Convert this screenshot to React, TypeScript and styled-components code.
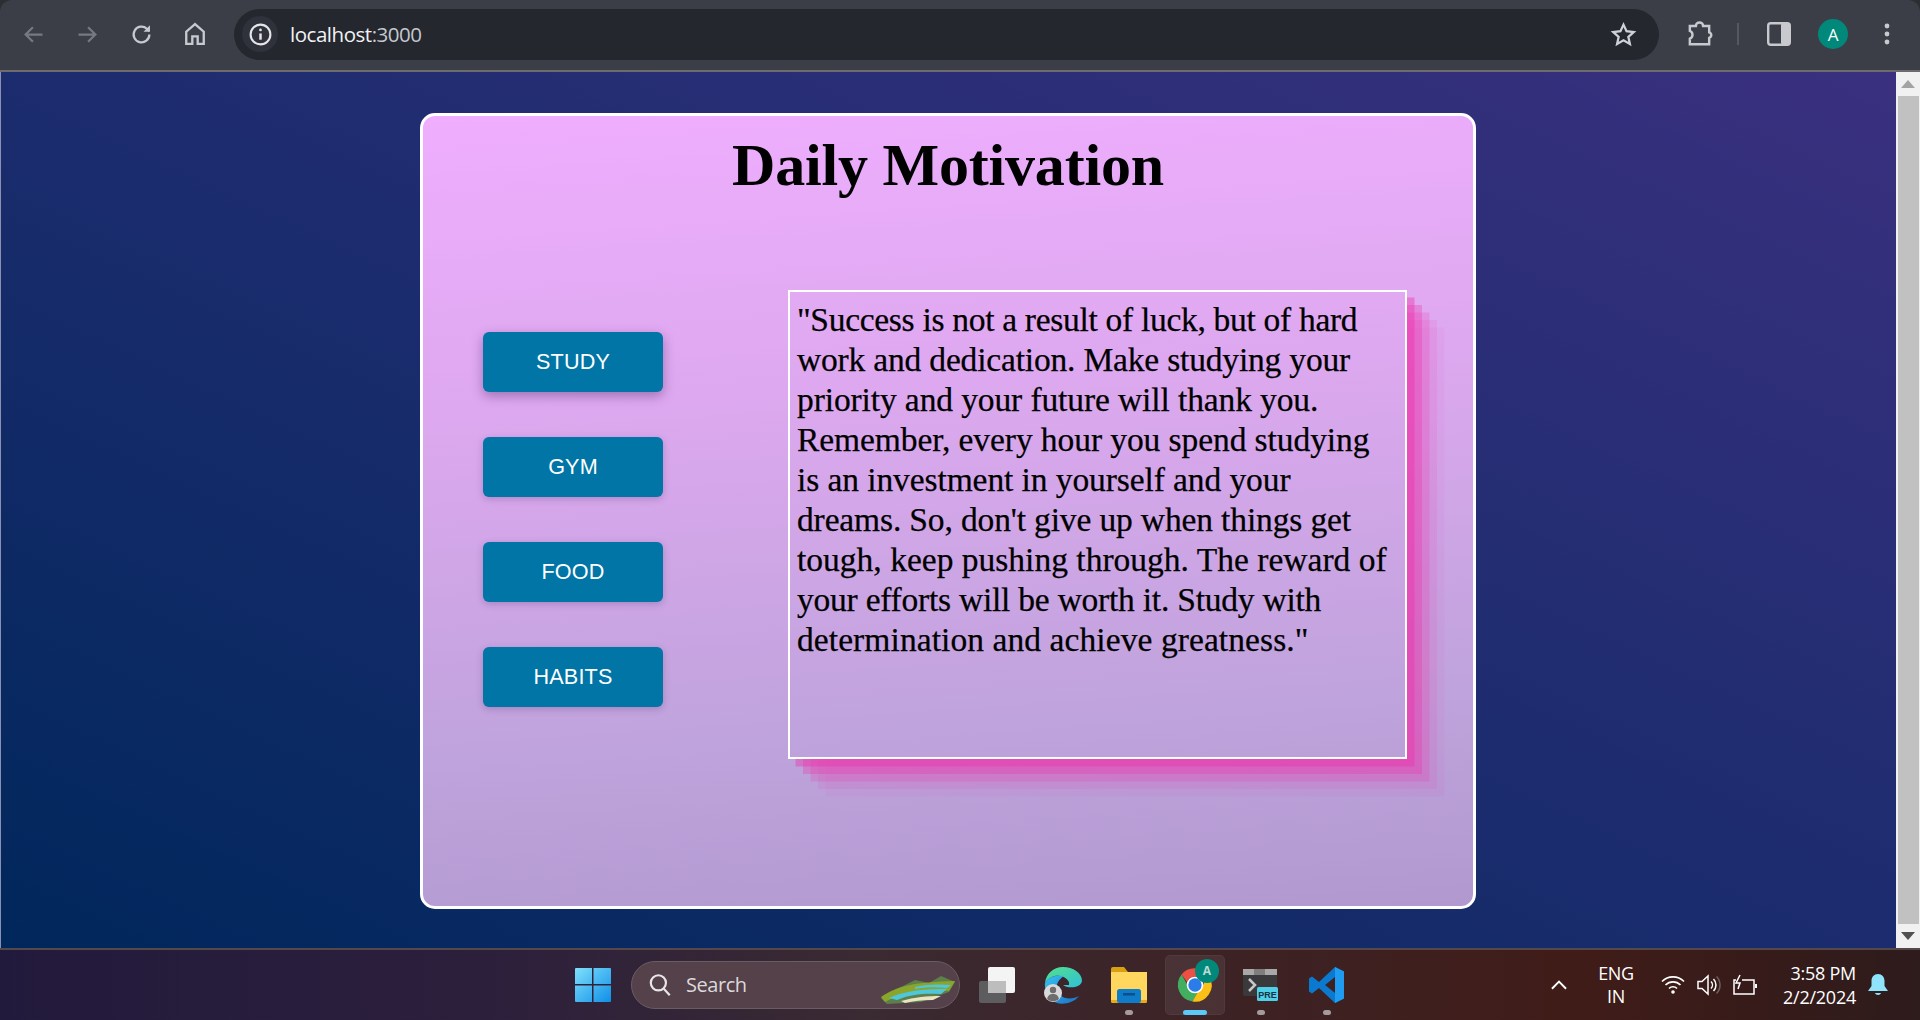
import React from "react";
import styled, { createGlobalStyle } from "styled-components";

const Global = createGlobalStyle`
  html, body { margin: 0; padding: 0; height: 100%; overflow: hidden; background: #2c2e33; }
  * { box-sizing: border-box; }
`;

const Window = styled.div`
  display: flex; flex-direction: column; width: 1920px; height: 1020px; overflow: hidden;
`;

const Toolbar = styled.header`
  display: flex; align-items: center; flex: 0 0 72px; height: 72px;
  padding: 0 0 2px 6px; background: #3b3e46;
  border-bottom: 2px solid #6c6c6e; border-radius: 12px 12px 0 0;
`;
const ToolSlot = styled.div<{ $color?: string }>`
  display: flex; align-items: center; justify-content: center; flex: 0 0 54px; height: 54px;
  color: ${(p) => p.$color || "#c7c9cf"};
`;
const AddressBar = styled.div`
  display: flex; align-items: center; width: 1425px; height: 51px; margin-left: 12px; padding-left: 8px;
  background: #24272e; border-radius: 26px;
`;
const InfoChip = styled.div`
  display: flex; align-items: center; justify-content: center; width: 36px; height: 36px;
  border-radius: 50%; background: #2f323a; color: #e4e5e8;
`;
const Url = styled.span`
  margin-left: 12px; font: 400 20.5px/1 "Open Sans", "Noto Sans", sans-serif; letter-spacing: -0.47px; color: #f1f2f4;
`;
const UrlPort = styled.span`color: #c5c8cd;`;
const StarSlot = styled.div`
  display: flex; align-items: center; justify-content: center; width: 36px; margin-left: auto; margin-right: 18px; color: #cfd1d6;
`;
const ExtensionSlot = styled(ToolSlot)`margin-left: 13px;`;
const Divider = styled.div`width: 2px; height: 22px; margin: 0 13px 0 11px; background: #55585f;`;
const Avatar = styled.div`
  display: flex; align-items: center; justify-content: center; width: 30px; height: 30px; border-radius: 50%;
  background: #00897b; color: #fff; font: 400 17px/1 "Open Sans", sans-serif;
`;

const Viewport = styled.div`display: flex; flex: 1 1 auto; min-height: 0;`;
const Page = styled.main`
  flex: 1 1 auto; padding-top: 41px; box-shadow: inset 1px 0 0 #8a90ad;
  background: linear-gradient(to top right, #00275c 0%, #1c2c6e 50%, #3a307f 100%);
`;
const Card = styled.section`
  width: 1056px; height: 796px; margin: 0 auto; padding-top: 15px;
  border: 3px solid #fff; border-radius: 15px;
  background: linear-gradient(176deg, #efaefe 0%, #dda8ef 35%, #bfa3dc 75%, #b199cf 100%);
`;
const Title = styled.h1`
  margin: 0; text-align: center; color: #000; letter-spacing: -0.2px;
  font: 700 60px/69px "Liberation Serif", "Times New Roman", serif;
`;
const Content = styled.div`display: flex; align-items: flex-start; padding: 90px 0 0 60px;`;
const Nav = styled.nav`display: flex; flex-direction: column; gap: 45px; width: 180px; margin: 42px 125px 0 0;`;
const NavButton = styled.button<{ $raised?: boolean }>`
  height: 60px; padding: 0 0 1px; border: 0; border-radius: 6px; background: #0075a6; color: #fff;
  font: 400 21.6px/1 "Liberation Sans", Arial, sans-serif; letter-spacing: 0.15px;
  box-shadow: ${(p) => (p.$raised ? "0 4px 12px rgba(60, 30, 90, 0.4)" : "0 2px 7px rgba(60, 30, 90, 0.25)")};
`;
const QuoteBox = styled.article`
  width: 619px; height: 469px; padding: 8px 7px 0; border: 2px solid #fff; color: #000;
  box-shadow: rgba(240, 46, 170, 0.4) 7.5px 7.5px, rgba(240, 46, 170, 0.3) 15px 15px,
    rgba(240, 46, 170, 0.2) 22.5px 22.5px, rgba(240, 46, 170, 0.1) 30px 30px, rgba(240, 46, 170, 0.05) 37.5px 37.5px;
`;
const QuoteLine = styled.div<{ $track: number }>`
  white-space: nowrap; font: 400 33.5px/40px "Liberation Serif", "Times New Roman", serif;
  letter-spacing: ${(p) => p.$track}px; -webkit-text-stroke: 0.25px #000;
`;

const Scrollbar = styled.aside`
  display: flex; flex: 0 0 24px; flex-direction: column; align-items: center; background: #f1f1f1;
`;
const ScrollArrow = styled.div`
  display: flex; align-items: center; justify-content: center; flex: 0 0 24px; color: #a3a3a3;
`;
const ScrollThumb = styled.div`flex: 1 1 auto; width: 21px; background: #c1c1c1;`;

const Taskbar = styled.footer`
  display: flex; align-items: center; flex: 0 0 72px; height: 72px; padding: 0 32px 0 560px;
  border-top: 2px solid #55484b;
  background: linear-gradient(90deg, #221a3c 0%, #2c1f3c 25%, #3a2a32 45%, #3d2224 65%, #401c18 82%, #2e1b1c 100%);
`;
const TaskSlot = styled.div`
  position: relative; display: flex; align-items: center; justify-content: center; flex: 0 0 66px; height: 60px;
`;
const ActiveSlot = styled(TaskSlot)`
  &::before {
    content: ""; position: absolute; left: 3px; right: 3px; top: 0; bottom: 0; border-radius: 5px;
    background: rgba(255, 255, 255, 0.07); box-shadow: inset 0 0 0 1px rgba(255, 255, 255, 0.04);
  }
`;
const RunDot = styled.span<{ $active?: boolean }>`
  position: absolute; bottom: 0; left: 50%; transform: translateX(-50%); height: 5px; border-radius: 3px;
  width: ${(p) => (p.$active ? "24px" : "8px")}; background: ${(p) => (p.$active ? "#5cc8f8" : "#a59a9c")};
`;
const SearchPill = styled.div`
  position: relative; display: flex; align-items: center; width: 329px; height: 48px; margin: 0 4px 0 5px; padding-left: 15px;
  border: 1.5px solid #6a5c62; border-radius: 24px; background: #54414a; color: #e8e6e8;
`;
const SearchText = styled.span`margin-left: 13px; font: 400 20px/1 "Open Sans", sans-serif; letter-spacing: -0.45px; color: #dcd9db;`;
const SearchArt = styled.div`position: absolute; right: 2px; bottom: 4px; display: flex;`;
const ChromeBadge = styled.div`
  position: absolute; top: 4px; left: 33px; display: flex; align-items: center; justify-content: center;
  width: 24px; height: 24px; border-radius: 50%; background: #00897b; color: #bcd9d5; font: 700 12px/1 "Open Sans", sans-serif;
`;
const Tray = styled.div`display: flex; align-items: center; margin-left: auto; color: #fff;`;
const TrayIcon = styled.div<{ $left: number; $width: number }>`
  display: flex; align-items: center; justify-content: center;
  margin-left: ${(p) => p.$left}px; width: ${(p) => p.$width}px;
`;
const Lang = styled.div`
  width: 50px; margin-left: 24px; text-align: center; color: #fff;
  font: 400 18px/23px "Open Sans", sans-serif; letter-spacing: -0.4px;
`;
const Clock = styled.div`
  width: 100px; margin-left: -1px; text-align: right; color: #fff;
  font: 400 18px/24px "Open Sans", sans-serif; letter-spacing: -0.25px;
`;

const Stroke: React.FC<{ s?: number; w?: number; children: React.ReactNode }> = ({ s = 24, w = 2, children }) => (
  <svg width={s} height={s} viewBox="0 0 24 24" fill="none" stroke="currentColor" strokeWidth={w}>{children}</svg>
);

const ChromeLogo = () => (
  <svg width="40" height="40" viewBox="0 0 48 48">
    <path d="M24 4a20 20 0 0 1 17.3 10H24a10 10 0 0 0-9.4 6.6L7.8 11.5A20 20 0 0 1 24 4z" fill="#ea4335" />
    <path d="M7.8 11.5l8.8 15.2a10 10 0 0 0 11.4 6.500L21 43.800A20 20 0 0 1 7.800 11.500z" fill="#34a853" />
    <path d="M41.300 14a20 20 0 0 1-20.300 29.800l8.800-15.200A10 10 0 0 0 33 14z" fill="#fbbc04" />
    <circle cx="24" cy="24" r="10" fill="#fff" />
    <circle cx="24" cy="24" r="8" fill="#1a73e8" />
  </svg>
);

const lines: [string, number][] = [
  ["\"Success is not a result of luck, but of hard", -0.3],
  ["work and dedication. Make studying your", -0.18],
  ["priority and your future will thank you.", -0.11],
  ["Remember, every hour you spend studying", -0.08],
  ["is an investment in yourself and your", -0.09],
  ["dreams. So, don't give up when things get", -0.14],
  ["tough, keep pushing through. The reward of", 0.01],
  ["your efforts will be worth it. Study with", -0.23],
  ["determination and achieve greatness.\"", 0.08],
];

export default function App() {
  return (
    <Window>
      <Global />
      <Toolbar>
        <ToolSlot $color="#777980"><Stroke s={27}><path d="M20 12H5M11.500 5.500 5 12l6.500 6.500" /></Stroke></ToolSlot>
        <ToolSlot $color="#777980"><Stroke s={27}><path d="M4 12h15M12.500 5.500 19 12l-6.500 6.500" /></Stroke></ToolSlot>
        <ToolSlot><Stroke s={27}><path d="M19 12a7 7 0 1 1-2.200-5.100L19 9" /><path d="M19.500 3.800V9.500h-5.700" fill="currentColor" stroke="none" /></Stroke></ToolSlot>
        <ToolSlot><Stroke s={28}><path d="M12 3.500 4.500 10v10.500h5.200V14h4.600v6.500h5.200V10z" /></Stroke></ToolSlot>
        <AddressBar>
          <InfoChip>
            <Stroke s={25}><circle cx="12" cy="12" r="9.500" /><path d="M12 11v6" strokeWidth="2.400" /><circle cx="12" cy="7.600" r="1.300" fill="currentColor" stroke="none" /></Stroke>
          </InfoChip>
          <Url>localhost<UrlPort>:3000</UrlPort></Url>
          <StarSlot>
            <Stroke s={27}><path d="M12 3.200l2.700 5.900 6.400.7-4.800 4.300 1.400 6.300L12 17.200 6.300 20.400l1.400-6.300-4.800-4.300 6.400-.7z" /></Stroke>
          </StarSlot>
        </AddressBar>
        <ExtensionSlot>
          <Stroke s={29}><path d="M4 5h5a3 3 0 0 1 6 0h5v5.200a2.400 2.400 0 0 1 0 4.600V20H4v-4.500a3.500 3.500 0 0 0 0-6.500z" /></Stroke>
        </ExtensionSlot>
        <Divider />
        <ToolSlot>
          <svg width="24" height="24" viewBox="0 0 24 24">
            <rect x="1.200" y="1.200" width="21.600" height="21.600" rx="2.500" fill="none" stroke="currentColor" strokeWidth="2.400" />
            <rect x="14" y="1" width="9" height="22" rx="2" fill="currentColor" />
          </svg>
        </ToolSlot>
        <ToolSlot><Avatar>A</Avatar></ToolSlot>
        <ToolSlot>
          <svg width="8" height="24" viewBox="0 0 8 24" fill="currentColor">
            <circle cx="4" cy="4" r="2.400" /><circle cx="4" cy="12" r="2.400" /><circle cx="4" cy="20" r="2.400" />
          </svg>
        </ToolSlot>
      </Toolbar>

      <Viewport>
        <Page>
          <Card>
            <Title>Daily Motivation</Title>
            <Content>
              <Nav>
                <NavButton $raised>STUDY</NavButton>
                <NavButton>GYM</NavButton>
                <NavButton>FOOD</NavButton>
                <NavButton>HABITS</NavButton>
              </Nav>
              <QuoteBox>
                {lines.map(([l, t]) => <QuoteLine key={l} $track={t}>{l}</QuoteLine>)}
              </QuoteBox>
            </Content>
          </Card>
        </Page>
        <Scrollbar>
          <ScrollArrow><svg width="14" height="8" viewBox="0 0 14 8" fill="currentColor"><path d="M7 0l7 8H0z" /></svg></ScrollArrow>
          <ScrollThumb />
          <ScrollArrow><svg width="14" height="8" viewBox="0 0 14 8" fill="#505050"><path d="M0 0h14L7 8z" /></svg></ScrollArrow>
        </Scrollbar>
      </Viewport>

      <Taskbar>
        <TaskSlot>
          <svg width="36" height="36" viewBox="0 0 36 36">
            <defs><linearGradient id="win" x1="0" y1="0" x2="1" y2="1"><stop offset="0" stopColor="#7fe0fb" /><stop offset="1" stopColor="#0f8fe8" /></linearGradient></defs>
            <path d="M1 1h16v16H0V2a1 1 0 0 1 1-1zM18.500 1H35a1 1 0 0 1 1 1v15H18.500zM0 18.500h17V35H1a1 1 0 0 1-1-1zM18.500 18.500H36V34a1 1 0 0 1-1 1H18.500z" fill="url(#win)" />
          </svg>
        </TaskSlot>
        <SearchPill>
          <svg width="26" height="26" viewBox="0 0 24 24" fill="none" stroke="currentColor" strokeWidth="2"><circle cx="10.500" cy="10" r="7" /><path d="M15.500 15.500 21 21.500" /></svg>
          <SearchText>Search</SearchText>
          <SearchArt>
            <svg width="76" height="30" viewBox="0 0 76 30">
              <path d="M18 14 34 6l14 3 12-7 14 6-6 10L40 28 6 30 0 24z" fill="#5d7f4a" />
              <path d="M0 23C16 12 34 8 74 7l-6 10C44 14 22 18 4 28z" fill="#8aa52c" />
              <path d="M8 24c18-8 36-9 58-9l-6 5c-16-1-30 0-44 6z" fill="#4ec6dc" />
              <path d="M20 27c14-4 26-5 40-5l-8 4c-10 0-20 1-28 3z" fill="#e9e4c4" />
              <path d="M34 13c12-3 24-3 36-2l-4 3c-10-1-22-1-32 1z" fill="#4ec6dc" />
            </svg>
          </SearchArt>
        </SearchPill>
        <TaskSlot>
          <svg width="36" height="36" viewBox="0 0 36 36">
            <rect x="0" y="14" width="27" height="22" rx="2" fill="#5d5d5f" />
            <rect x="9" y="0" width="27" height="26" rx="2" fill="#f4f4f4" />
            <rect x="9" y="14" width="18" height="12" fill="#bdbdbd" />
          </svg>
        </TaskSlot>
        <TaskSlot>
          <svg width="38" height="38" viewBox="0 0 38 38">
            <defs>
              <linearGradient id="edgeA" x1="0" y1="0" x2="1" y2="1"><stop offset="0" stopColor="#35c1f1" /><stop offset="1" stopColor="#1c71c4" /></linearGradient>
              <linearGradient id="edgeB" x1="0" y1="0" x2="1" y2="1"><stop offset="0" stopColor="#54e08a" /><stop offset="1" stopColor="#2fc0d8" /></linearGradient>
            </defs>
            <path d="M19 1C9 1 2 8 1 17c4-6 10-8 15-7 6 1 10 5 9 9h-6c5 4 18 3 19-4C38 7 29 1 19 1z" fill="url(#edgeB)" />
            <path d="M1 17c-1 9 4 17 12 20 6 2 17 0 22-7-5 3-14 4-19-1-5-5-5-13 4-19-7-1-15 0-19 7z" fill="url(#edgeA)" />
            <circle cx="9" cy="27" r="9" fill="#d9d9d9" />
            <circle cx="9" cy="24" r="3.200" fill="#6e6e6e" />
            <path d="M3 33c1-4 3-5 6-5s5 1 6 5c-3 3-9 3-12 0z" fill="#6e6e6e" />
          </svg>
        </TaskSlot>
        <TaskSlot>
          <svg width="36" height="36" viewBox="0 0 36 36">
            <path d="M0 2a2 2 0 0 1 2-2h11l4 5H0z" fill="#d9a013" />
            <path d="M0 5h36v29a2 2 0 0 1-2 2H2a2 2 0 0 1-2-2z" fill="#ffd75e" />
            <path d="M0 33h36v1a2 2 0 0 1-2 2H2a2 2 0 0 1-2-2z" fill="#e8a91b" />
            <rect x="6" y="22" width="24" height="14" rx="2.500" fill="#0f7cc9" />
            <rect x="12" y="26" width="12" height="2.500" fill="#0a4f8a" />
          </svg>
          <RunDot />
        </TaskSlot>
        <ActiveSlot>
          <ChromeLogo />
          <ChromeBadge>A</ChromeBadge>
          <RunDot $active />
        </ActiveSlot>
        <TaskSlot>
          <svg width="36" height="32" viewBox="0 0 36 32">
            <rect x="0" y="0" width="34" height="27" rx="2" fill="#3a3a3c" />
            <rect x="0" y="0" width="34" height="6" fill="#a8a8a8" />
            <rect x="11" y="0" width="11" height="6" fill="#7e7e7e" />
            <path d="M6 10l6 6-6 6" fill="none" stroke="#c8c8c8" strokeWidth="2.500" />
            <rect x="14" y="18" width="21" height="14" rx="1.500" fill="#4fd0e8" />
            <text x="24.500" y="28.500" textAnchor="middle" fontFamily="Liberation Sans, sans-serif" fontWeight="700" fontSize="9" fill="#143244">PRE</text>
          </svg>
          <RunDot />
        </TaskSlot>
        <TaskSlot>
          <svg width="38" height="38" viewBox="0 0 38 38">
            <path d="M27 1 36 5.500v27L27 37 11 22 4 27.500 1 25.500v-13L4 10.500 11 16zM27 11 17 19l10 8z" fill="#0a7ad1" />
            <path d="M27 1 36 5.500v27L27 37z" fill="#1f9cf0" />
          </svg>
          <RunDot />
        </TaskSlot>
        <Tray>
          <TrayIcon $left={0} $width={16}>
            <svg width="17" height="10" viewBox="0 0 17 10" fill="none" stroke="#fff" strokeWidth="2"><path d="M1 9l7.500-7.500L16 9" /></svg>
          </TrayIcon>
          <Lang>ENG<br />IN</Lang>
          <TrayIcon $left={20} $width={24}>
            <svg width="24" height="20" viewBox="0 0 24 20" fill="none" stroke="#fff" strokeWidth="1.600">
              <path d="M1 6.500a15.500 15.500 0 0 1 22 0M4.500 10a10.500 10.500 0 0 1 15 0M8 13.500a5.500 5.500 0 0 1 8 0" />
              <circle cx="12" cy="17" r="1.800" fill="#fff" stroke="none" />
            </svg>
          </TrayIcon>
          <TrayIcon $left={12} $width={24}>
            <svg width="24" height="22" viewBox="0 0 24 22" fill="none" stroke="#fff" strokeWidth="1.500">
              <path d="M1 7.500h4L11 2v18l-6-5.500H1z" />
              <path d="M14 7.500a5 5 0 0 1 0 7M16.500 5a8.500 8.500 0 0 1 0 12" />
              <path d="M19.500 2.500a12 12 0 0 1 0 17" stroke="#6f5f5c" />
            </svg>
          </TrayIcon>
          <TrayIcon $left={12} $width={24}>
            <svg width="24" height="22" viewBox="0 0 24 22" fill="none" stroke="#fff" strokeWidth="1.500">
              <path d="M3 6H1v14h20v-3M9 6h12v11" />
              <path d="M23 10v4" strokeWidth="2" />
              <path d="M7 1 3 9h4l-2 6" strokeWidth="1.500" />
            </svg>
          </TrayIcon>
          <Clock>3:58 PM<br />2/2/2024</Clock>
          <TrayIcon $left={12} $width={20}>
            <svg width="20" height="24" viewBox="0 0 20 24" fill="#8fe3fb">
              <path d="M10 1c4 0 6.500 3 6.500 7v5l3.500 5H0l3.500-5V8c0-4 2.500-7 6.500-7z" />
              <path d="M7 20h6c-.5 2.500-5.500 2.500-6 0z" />
            </svg>
          </TrayIcon>
        </Tray>
      </Taskbar>
    </Window>
  );
}
